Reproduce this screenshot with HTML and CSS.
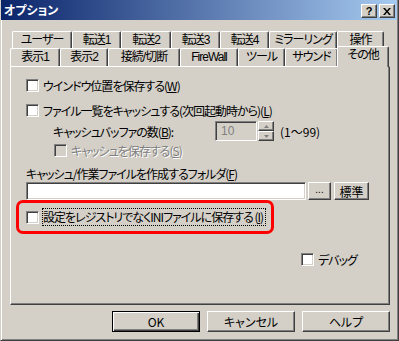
FILE: index.html
```html
<!DOCTYPE html>
<html lang="ja">
<head>
    <meta charset="UTF-8">
    <title>オプション</title>
    <link rel="stylesheet" href="styles.css">
</head>
<body>
    <div class="dlg">
        <div class="titlebar">
            <span class="title">オプション</span>
            <span class="tbtn">?</span>
            <span class="tbtn">
                <svg width="8" height="7" viewBox="0 0 8 7"><path d="M0 0h2l2 2.5L6 0h2L5 3.5 8 7H6L4 4.5 2 7H0l3-3.5z" fill="#000"/></svg>
            </span>
        </div>
        <div class="main">
            <div class="tabs back">
                <span class="tab" style="width:60px">ユーザー</span>
                <span class="tab" style="width:49px">転送1</span>
                <span class="tab" style="width:50px">転送2</span>
                <span class="tab" style="width:49px">転送3</span>
                <span class="tab" style="width:49px">転送4</span>
                <span class="tab" style="width:68px">ミラーリング</span>
                <span class="tab" style="width:47px">操作</span>
            </div>
            <div class="tabs front">
                <span class="tab" style="width:50px">表示1</span>
                <span class="tab" style="width:48px">表示2</span>
                <span class="tab" style="width:72px">接続/切断</span>
                <span class="tab" style="width:58px">FireWall</span>
                <span class="tab" style="width:47px">ツール</span>
                <span class="tab" style="width:53px">サウンド</span>
                <span class="tab active" style="width:52px">その他</span>
            </div>
            <div class="panel">
                <div class="row chk r1">
                    <span class="cb"></span>ウインドウ位置を保存する(<u>W</u>)
                </div>
                <div class="row chk r2">
                    <span class="cb"></span>ファイル一覧をキャッシュする(次回起動時から)(<u>L</u>)
                </div>
                <div class="row spin-row">
                    <span class="spin-label">キャッシュバッファの数(<u>B</u>):</span>
                    <span class="spin-input">10</span>
                    <span class="spin-btns">
                        <span class="spin-btn"><svg width="5" height="3" viewBox="0 0 5 3"><path d="M2.5 0L5 3H0z" fill="#808080"/></svg></span>
                        <span class="spin-btn"><svg width="5" height="3" viewBox="0 0 5 3"><path d="M0 0h5L2.5 3z" fill="#808080"/></svg></span>
                    </span>
                    <span class="range">(1〜99)</span>
                </div>
                <div class="row chk r4 disabled">
                    <span class="cb off"></span>キャッシュを保存する(<u>S</u>)
                </div>
                <div class="folder-label">キャッシュ/作業ファイルを作成するフォルダ(<u>F</u>)</div>
                <div class="row folder-row">
                    <span class="field"></span>
                    <span class="btn small dots">...</span>
                    <span class="btn small std">標準</span>
                </div>
                <div class="mark">
                    <span class="cb"></span><span class="focus">設定をレジストリでなくINIファイルに保存する (<u>I</u>)</span>
                </div>
                <div class="row chk debug">
                    <span class="cb"></span>デバッグ
                </div>
            </div>
            <div class="buttons">
                <span class="btn big default">OK</span>
                <span class="btn big">キャンセル</span>
                <span class="btn big">ヘルプ</span>
            </div>
        </div>
    </div>
</body>
</html>
```

FILE: styles.css
```css
body {
    margin: 0;
    font-family: "Noto Sans CJK JP", "Liberation Sans", sans-serif;
    font-size: 12px;
    font-feature-settings: "palt";
    letter-spacing: -1px;
    color: #000;
    background: #d4d0c8;
}
u {
    text-decoration: underline;
    text-underline-offset: 1px;
}
.dlg {
    width: 399px;
    height: 341px;
    box-sizing: border-box;
    background: #d4d0c8;
    border-left: 1px solid #d4d0c8;
    border-right: 1px solid #404040;
    border-bottom: 1px solid #404040;
    box-shadow: inset 1px 0 #fff, inset -1px -1px #808080;
}
.titlebar {
    height: 20px;
    margin-right: 1px;
    display: flex;
    align-items: flex-start;
    background: linear-gradient(to right, #0a246a, #a6caf0);
    padding: 0 2px 0 3px;
}
.title {
    flex: 1;
    color: #fff;
    font-weight: bold;
    line-height: 19px;
    letter-spacing: 0;
}
.tbtn {
    width: 16px;
    height: 14px;
    margin-top: 4px;
    box-sizing: border-box;
    display: flex;
    align-items: center;
    justify-content: center;
    background: #d4d0c8;
    border: 1px solid;
    border-color: #fff #404040 #404040 #fff;
    box-shadow: inset -1px -1px #808080;
    font-family: "Liberation Sans", sans-serif;
    font-weight: bold;
    font-size: 11px;
    line-height: 12px;
    letter-spacing: 0;
}
.tbtn + .tbtn {
    margin-left: 2px;
}
.main {
    padding: 11px 0 0 9px;
}
.tabs {
    display: flex;
}
.tabs.back {
    height: 17px;
    margin-left: 2px;
}
.tabs.front {
    height: 18px;
}
.tab {
    box-sizing: border-box;
    height: 100%;
    text-align: center;
    padding-top: 2px;
    line-height: 13px;
    font-family: "Liberation Sans", "Noto Sans CJK JP", sans-serif;
    border-top: 1px solid #fff;
    border-left: 1px solid #fff;
    border-right: 1px solid #404040;
    border-radius: 2px 2px 0 0;
    box-shadow: inset -1px 0 #808080;
    white-space: nowrap;
}
.tab.active {
    position: relative;
    z-index: 1;
    height: 21px;
    margin: -2px 0 0 -1px;
    background: #d4d0c8;
    padding-top: 2px;
}
.panel {
    width: 380px;
    height: 239px;
    box-sizing: border-box;
    border-top: 1px solid #fff;
    border-left: 1px solid #fff;
    border-right: 1px solid #404040;
    border-bottom: 1px solid #404040;
    box-shadow: inset -1px -1px #808080;
    padding: 12px 0 0 15px;
}
.row {
    display: flex;
    align-items: center;
    white-space: nowrap;
}
.chk {
    height: 13px;
    line-height: 13px;
}
.cb {
    width: 13px;
    height: 13px;
    box-sizing: border-box;
    flex: none;
    margin-right: 4px;
    background: #fff;
    border: 1px solid;
    border-color: #808080 #fff #fff #808080;
    box-shadow: inset 1px 1px #404040, inset -1px -1px #d4d0c8;
}
.cb.off {
    background: #d4d0c8;
}
.r2 {
    margin-top: 12px;
}
.spin-row {
    margin-top: 4px;
    height: 20px;
}
.spin-label {
    width: 189px;
    padding-left: 27px;
    box-sizing: border-box;
}
.spin-input {
    width: 42px;
    height: 20px;
    box-sizing: border-box;
    border: 1px solid;
    border-color: #808080 #fff #fff #808080;
    box-shadow: inset 1px 1px #404040, inset -1px -1px #d4d0c8;
    color: #808080;
    padding-left: 5px;
    line-height: 18px;
    font-family: "Liberation Sans", sans-serif;
    letter-spacing: 0;
}
.spin-btns {
    display: flex;
    flex-direction: column;
    width: 16px;
    height: 20px;
    margin-left: 1px;
}
.spin-btn {
    flex: 1;
    display: flex;
    align-items: center;
    justify-content: center;
    box-sizing: border-box;
    border: 1px solid;
    border-color: #fff #404040 #404040 #fff;
    box-shadow: inset -1px -1px #808080;
}
.range {
    margin-left: 6px;
    letter-spacing: 0;
}
.r4 {
    margin-top: 3px;
    padding-left: 28px;
}
.disabled {
    color: #808080;
    text-shadow: 1px 1px #fff;
}
.folder-label {
    margin-top: 9px;
    line-height: 16px;
    white-space: nowrap;
}
.folder-row {
    height: 18px;
}
.field {
    width: 280px;
    height: 18px;
    box-sizing: border-box;
    background: #fff;
    border: 1px solid;
    border-color: #808080 #fff #fff #808080;
    box-shadow: inset 1px 1px #404040, inset -1px -1px #d4d0c8;
}
.btn {
    box-sizing: border-box;
    display: flex;
    align-items: center;
    justify-content: center;
    background: #d4d0c8;
    border: 1px solid;
    border-color: #fff #404040 #404040 #fff;
    box-shadow: inset -1px -1px #808080;
    white-space: nowrap;
}
.btn.small {
    height: 18px;
}
.dots {
    width: 23px;
    margin-left: 2px;
    line-height: 10px;
    align-items: flex-end;
    padding-bottom: 4px;
    font-family: "Liberation Sans", sans-serif;
    font-size: 10px;
    letter-spacing: 0;
}
.std {
    width: 35px;
    margin-left: 3px;
    letter-spacing: 0;
}
.mark {
    display: flex;
    align-items: center;
    width: 258px;
    height: 34px;
    box-sizing: border-box;
    margin-left: -10px;
    padding-left: 7px;
    border: 3px solid #f00;
    border-radius: 7px;
    white-space: nowrap;
}
.focus {
    outline: 1px dotted #000;
    outline-offset: 0;
    padding: 1px 2px 1px 0;
    line-height: 14px;
}
.debug {
    margin-top: 19px;
    padding-left: 275px;
}
.buttons {
    width: 380px;
    display: flex;
    justify-content: flex-end;
    gap: 7px;
    margin-top: 6px;
}
.btn.big {
    width: 88px;
    height: 21px;
    letter-spacing: 0;
}
.btn.default {
    border: 1px solid #000;
    box-shadow: inset 1px 1px #fff, inset -1px -1px #404040, inset -2px -2px #808080;
}
```
